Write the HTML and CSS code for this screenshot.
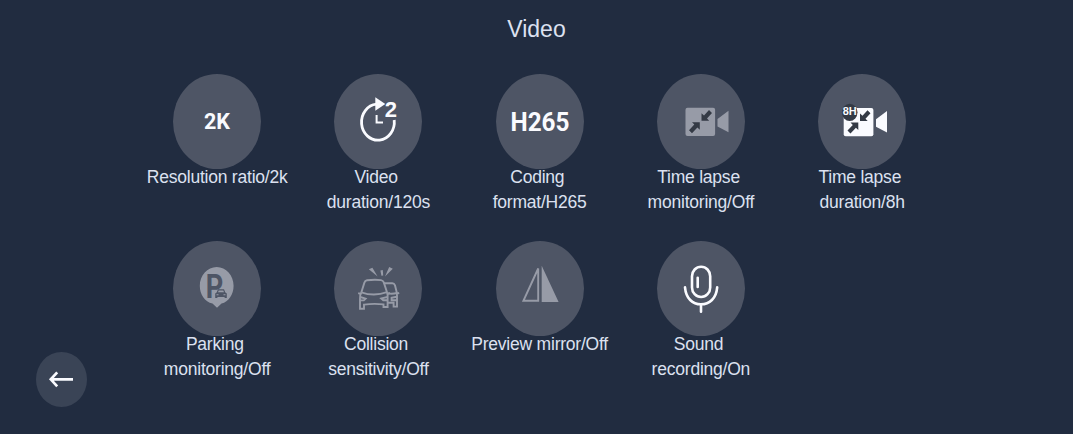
FILE: index.html
```
<!DOCTYPE html>
<html lang="en">
<head>
  <meta charset="UTF-8">
  <title>Video</title>
  <link rel="stylesheet" href="styles.css">
</head>
<body>
  <h1>Video</h1>

  <div class="grid">
    <button class="item">
      <svg class="icon" viewBox="0 0 88 95">
        <text class="bold" x="31" y="55" font-size="22" textLength="26" lengthAdjust="spacingAndGlyphs">2K</text>
      </svg>
      <span class="label">Resolution ratio/2k</span>
    </button>

    <button class="item">
      <svg class="icon" viewBox="0 0 88 95">
        <path class="line" stroke-width="2.8" d="M60.2 46 A16.4 18 0 1 1 42.5 30.2"/>
        <path d="M41.3 23.3 L51.3 30 L41.3 36.7 Z"/>
        <path class="line" stroke-width="2" d="M42.6 41 V48.6 H49"/>
        <text class="bold sans" x="50.8" y="43.3" font-size="22">2</text>
      </svg>
      <span class="label">Video <br>duration/120s</span>
    </button>

    <button class="item">
      <svg class="icon" viewBox="0 0 88 95">
        <text class="bold" x="14.5" y="56.6" font-size="26" textLength="59" lengthAdjust="spacingAndGlyphs">H265</text>
      </svg>
      <span class="label">Coding <br>format/H265</span>
    </button>

    <button class="item">
      <svg class="icon off" viewBox="0 0 88 95">
        <rect x="28.5" y="33.7" width="29.6" height="28.3" rx="2"/>
        <path d="M60.5 45 L71.5 36.7 V58.3 L60.5 52.5 Z"/>
        <g class="cut">
          <path d="M44.5 39.2 V46.7 H52.2 L50 44.4 L55 39 L52 36 L47 41.5 Z"/>
          <path d="M42.8 55.8 V48.3 H35 L37.3 50.6 L32 56.2 L35 59.2 L40.4 53.4 Z"/>
        </g>
      </svg>
      <span class="label">Time lapse <br>monitoring/Off</span>
    </button>

    <button class="item">
      <svg class="icon" viewBox="0 0 88 95">
        <rect x="25.7" y="34" width="29.7" height="28.3" rx="2"/>
        <path d="M58 45.3 L69 37 V58.6 L58 52.8 Z"/>
        <g class="cut">
          <path d="M42 39.5 V47 H49.7 L47.5 44.7 L52.5 39.3 L49.5 36.3 L44.5 41.8 Z"/>
          <path d="M40.3 56.1 V48.6 H32.5 L34.8 50.9 L29.5 56.5 L32.5 59.5 L37.9 53.7 Z"/>
          <ellipse cx="31.7" cy="38.3" rx="7.8" ry="8.6"/>
        </g>
        <text class="bold sans" x="24.7" y="41.3" font-size="11.5" textLength="14" lengthAdjust="spacingAndGlyphs">8H</text>
      </svg>
      <span class="label">Time lapse <br>duration/8h</span>
    </button>

    <button class="item">
      <svg class="icon off" viewBox="0 0 88 95">
        <path d="M44 66.7 L39.5 62.6 C31.8 60.8 26.8 53.6 26.8 44.8 C26.8 34.4 34.4 26 43.7 26 C53 26 60.6 34.4 60.6 44.8 C60.6 53.6 55.6 60.8 48.5 62.6 Z"/>
        <g class="hole">
          <text class="bold" x="32.8" y="56.7" font-size="33" textLength="17.5" lengthAdjust="spacingAndGlyphs">P</text>
          <path d="M43.6 51.5 L45 48.3 H51 L52.4 51.5 L53.8 52.6 V57 H51.6 V55.9 H44.4 V57 H42.2 V52.6 Z"/>
        </g>
        <path d="M45 51.3 L45.7 49.6 H50.3 L51 51.3 Z M43.5 53.3 h2 v1 h-2 Z M50.5 53.3 h2 v1 h-2 Z"/>
      </svg>
      <span class="label">Parking <br>monitoring/Off</span>
    </button>

    <button class="item">
      <svg class="icon off" viewBox="0 0 88 95">
        <path d="M34.8 28.2 L38.4 26.8 L43.6 35.4 Z M46.4 29.5 L48.8 29 L49.2 34.5 L47.4 34.7 Z M55.2 26 L58.8 27.8 L51 35.6 Z"/>
        <g class="line" stroke-width="1.9">
          <path d="M27.3 51.5 L30.4 41.6 Q31 39.6 33 39.3 Q40.5 38.2 47 39.1 Q49 39.4 49.8 41.4 L53 51.2"/>
          <path d="M27.3 51.3 Q40 55.8 53 51.2 M24.2 52.2 L27 53 M56 52 L53.2 53"/>
          <path d="M27.3 51.5 Q25.6 54.5 26 58 V67.7 H30 V63.6 Q40 62.3 49.5 63.4 V66 H53.6 V57 Q54 54 53 51.2"/>
          <path d="M26.2 56 L31.6 57.6 L29.8 59.4 H26.2 M53.6 55.8 L47.2 57.5 L49.3 59.3 H53.6"/>
          <path d="M49.8 42.3 H58.3 Q60.2 42.3 61 44.4 L63 52.3 V65.6 H59.6 V61.8 H53.6 M53.4 52.4 Q59 53.3 62.6 52 M62.6 52.6 L65.2 52 M62.8 55.7 L57.6 56.7 V59.2 H62.8"/>
        </g>
      </svg>
      <span class="label">Collision <br>sensitivity/Off</span>
    </button>

    <button class="item">
      <svg class="icon off" viewBox="0 0 88 95">
        <path class="line" stroke-width="1.9" d="M42.2 27.5 V59.8 H27.4 Z"/>
        <path d="M45.7 24.7 L62.6 61 H45.7 Z"/>
      </svg>
      <span class="label">Preview mirror/Off</span>
    </button>

    <button class="item">
      <svg class="icon" viewBox="0 0 88 95">
        <g class="line" stroke-width="2.6" stroke-linecap="round">
          <rect x="35" y="25.7" width="18.2" height="30.3" rx="9.1" ry="9.6"/>
          <path d="M40.7 36.8 V46 M28 46.3 C29 57.5 35.5 63.3 44 63.3 C52.5 63.3 59.2 57.5 60.2 46.3 M44 63.3 V70.8"/>
        </g>
      </svg>
      <span class="label">Sound <br>recording/On</span>
    </button>
  </div>

  <button class="back" aria-label="Back">
    <svg viewBox="0 0 51 55">
      <path class="line" stroke-width="2.7" d="M37 27.3 H15 M21.2 20.3 L14.8 27.3 L21.2 34.3"/>
    </svg>
  </button>
</body>
</html>
```

FILE: styles.css
```
body {
  position: relative;
  margin: 0;
  height: 434px;
  overflow: hidden;
  background: #212c40;
  color: #dce1f0;
  font-family: "Liberation Sans", Arial, sans-serif;
}
h1 {
  margin: 0;
  padding-top: 14px;
  height: 60px;
  line-height: 30px;
  font-size: 23px;
  font-weight: normal;
  text-align: center;
}
button {
  padding: 0;
  border: none;
  background: none;
  color: inherit;
  font-family: inherit;
}
.grid {
  display: grid;
  grid-template-columns: repeat(5, 161.25px);
  grid-auto-rows: 167px;
  padding-left: 136.5px;
}
.item {
  display: flex;
  flex-direction: column;
  align-items: center;
}
.icon {
  flex: none;
  width: 88px;
  height: 95px;
  border-radius: 50%;
  background: #4e5565;
  fill: #fafbff;
  stroke: none;
}
.line {
  fill: none;
  stroke: #fafbff;
}
.off {
  fill: #979ba7;
}
.off .line {
  stroke: #979ba7;
}
.cut {
  fill: #343a45;
}
.hole {
  fill: #4e5565;
}
.bold {
  font-family: Roboto, sans-serif;
  font-weight: bold;
}
.sans {
  font-family: "Liberation Sans", Arial, sans-serif;
}
/* pre keeps the space at the end of the first line */
.label {
  margin-top: -4px;
  font-size: 17.5px;
  line-height: 25px;
  letter-spacing: -0.22px;
  white-space: pre;
}
.back {
  position: absolute;
  left: 36px;
  top: 352px;
  width: 51px;
  height: 55px;
  border-radius: 50%;
  background: #3a4456;
}
.back svg {
  display: block;
}
```
